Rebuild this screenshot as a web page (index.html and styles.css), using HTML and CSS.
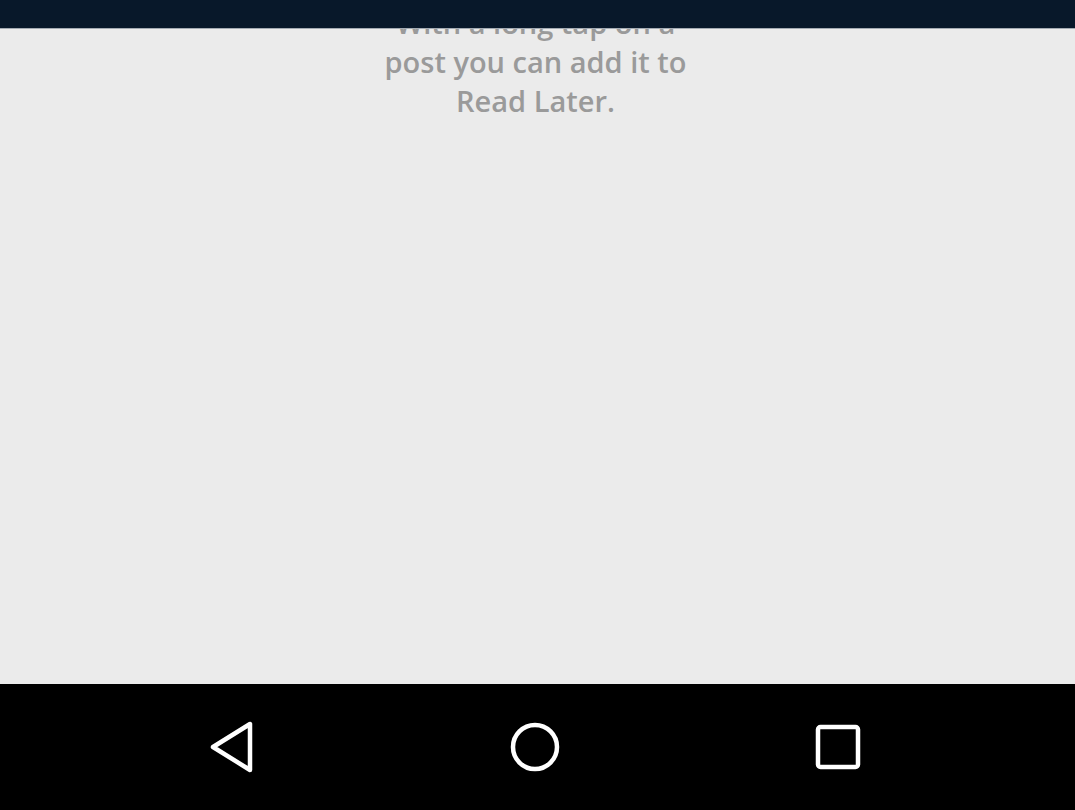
FILE: index.html
```html
<!DOCTYPE html>
<html>
<head>
<meta charset="utf-8">
<link rel="stylesheet" href="styles.css">
</head>
<body>
<div class="screen">
  <div class="statusbar"></div>
  <main class="content">
    <p class="empty">With a long tap on a<br>post you can add it to<br>Read Later.</p>
  </main>
  <nav class="navbar">
    <div class="nav-cell">
      <svg width="48" height="52" viewBox="0 0 48 52">
        <path d="M42 3 L42 49 L5 26 Z" fill="none" stroke="#fff" stroke-width="4.5" stroke-linejoin="round"/>
      </svg>
    </div>
    <div class="nav-cell">
      <svg width="52" height="52" viewBox="0 0 52 52">
        <circle cx="26" cy="26" r="22" fill="none" stroke="#fff" stroke-width="4.5"/>
      </svg>
    </div>
    <div class="nav-cell">
      <svg width="48" height="48" viewBox="0 0 48 48">
        <rect x="4" y="4" width="40" height="40" rx="2.5" fill="none" stroke="#fff" stroke-width="4.5"/>
      </svg>
    </div>
  </nav>
</div>
</body>
</html>
```
FILE: styles.css
```css
html, body {
  margin: 0;
  padding: 0;
  background: #000;
}
.screen {
  position: relative;
  width: 1075px;
  height: 810px;
  display: flex;
  flex-direction: column;
  overflow: hidden;
  font-family: "Open Sans", "Liberation Sans", sans-serif;
}
.statusbar {
  position: absolute;
  top: 0;
  left: 0;
  right: 0;
  height: 28px;
  background: #08182a;
  border-bottom: 1px solid #a4abb3;
  z-index: 2;
}
.content {
  flex: 1;
  background: #ebebeb;
  overflow: hidden;
  display: flex;
  justify-content: center;
  padding-right: 4px;
}
.empty {
  margin: 3px 0 0;
  text-align: center;
  color: #9a9a9a;
  font-size: 29px;
  font-weight: 600;
  line-height: 39px;
}
.navbar {
  height: 126px;
  background: #000;
  display: flex;
  align-items: center;
  padding-left: 182px;
  gap: 203px;
}
.nav-cell {
  width: 100px;
  display: flex;
  justify-content: center;
  align-items: center;
}
```
